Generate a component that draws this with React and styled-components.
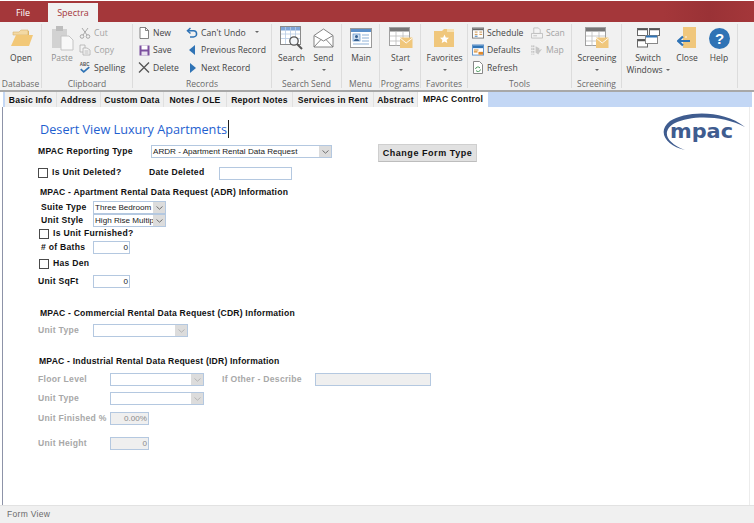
import React from 'react';
import styled, { createGlobalStyle } from 'styled-components';

const Global = createGlobalStyle`
  html, body { margin: 0; padding: 0; background: #fff; }
  * { box-sizing: border-box; }
`;

const Page = styled.div`
  width: 754px; height: 523px; display: flex; flex-direction: column; overflow: hidden;
  background: #fff; font-family: "Open Sans", "Liberation Sans", sans-serif; padding-top: 1px;
`;
const TitleBar = styled.div`
  height: 21px; flex: none; display: flex; align-items: flex-end; padding-left: 3px;
  background: linear-gradient(90deg, #a4373a 0%, #a4373a 88%, #9a3236 94%, #a4373a 100%);
`;
const FileTab = styled.div`
  width: 40px; height: 21px; color: #fff; font-size: 9px; display: flex; align-items: center; justify-content: center; padding-top: 2px;
`;
const SpectraTab = styled.div`
  width: 50px; margin-left: 5px; height: 19px; background: #f1f1f1; color: #a4373a; font-size: 9px;
  display: flex; align-items: center; justify-content: center;
`;
const Ribbon = styled.div`
  height: 68px; flex: none; background: #f1f1f1; display: flex; padding-top: 2px;
`;
const Group = styled.div`
  width: ${p => p.$w}px; flex: none; display: flex; flex-direction: column; height: 64px;
  border-right: 1px solid #dcdcdc;
`;
const GroupBody = styled.div`
  height: 54px; flex: none; display: flex; padding-left: ${p => p.$pl || 0}px;
`;
const GroupLabel = styled.div`
  height: 11px; line-height: 11px; text-align: center; font-size: 8.5px; color: #6a6a6a; white-space: nowrap;
`;
const Large = styled.div`
  width: ${p => p.$w}px; flex: none; display: flex; flex-direction: column; align-items: center;
  font-size: 8.5px; line-height: 12px; white-space: nowrap; color: ${p => p.$off ? '#8f8f8f' : '#444'};
`;
const LargeIcon = styled.div`
  height: 28px; display: flex; align-items: center; justify-content: center;
`;
const Caret = styled.span`
  width: 0; height: 0; display: ${p => p.$inline ? 'inline-block' : 'block'};
  border-left: 2px solid transparent; border-right: 2px solid transparent; border-top: 2.5px solid #666;
  margin: ${p => p.$inline ? `0 0 2px ${p.$gap || 3}px` : '5px 0 0'}; vertical-align: middle;
`;
const Stack = styled.div`
  display: flex; flex-direction: column; width: ${p => p.$w}px; flex: none;
`;
const Small = styled.div`
  height: 17.5px; display: flex; align-items: center; gap: 3px; font-size: 8.6px; white-space: nowrap;
  color: ${p => p.$off ? '#a3a3a3' : '#444'};
`;
const SmallIcon = styled.span`
  width: 12px; height: 12px; flex: none; display: flex; align-items: center; justify-content: center;
`;
const Rule = styled.div`
  height: 2px; flex: none; background: #a8a8a8;
`;
const TabStrip = styled.div`
  height: 15px; flex: none; display: flex; background: #c3d7f5; padding-left: 2px; margin-left: 3px; margin-right: 2px;
`;
const Tab = styled.div`
  width: ${p => p.$w}px; flex: none; height: 15px; display: flex; align-items: center; justify-content: center;
  font: bold 8.6px "Liberation Sans", sans-serif; letter-spacing: .22px; color: #111; white-space: nowrap;
  background: ${p => p.$active ? '#fff' : '#f0f0f0'};
  border-right: ${p => p.$active ? 'none' : '1px solid #e0e0e0'};
  padding-bottom: ${p => p.$active ? 2 : 0}px;
`;
const FormArea = styled.div`
  flex: 1; min-height: 0; margin-left: 2px; margin-right: 4px; padding-left: 35px; border-left: 1px solid #8d93a8; border-right: 1px solid #ececec;
  background: #fff; display: flex; flex-direction: column;
`;
const Header = styled.div`
  display: flex; height: 38px; padding-top: 13px; padding-right: 2px;
`;
const Title = styled.div`
  font: 12.7px "Open Sans", sans-serif; color: #1f5fd0; line-height: 18px; padding-left: 2px; white-space: nowrap; height: 18px;
  span { border-right: 1px solid #222; padding-right: 1px; }
`;
const Logo = styled.svg`
  margin-left: auto; margin-top: -8px; flex: none;
`;
const Row = styled.div`
  display: flex; align-items: center; flex: none;
  height: ${p => p.$h}px; margin-top: ${p => p.$mt || 0}px; padding-left: ${p => p.$pl || 0}px;
`;
const Label = styled.div`
  width: ${p => p.$w ? `${p.$w}px` : 'auto'}; flex: none; margin-left: ${p => p.$ml || 0}px; white-space: nowrap; padding-bottom: 2px;
  font: bold 8.6px "Liberation Sans", sans-serif; letter-spacing: .28px; color: ${p => p.$off ? '#a8a8a8' : '#111'};
`;
const Heading = styled.div`
  margin-left: ${p => p.$ml || 2}px; white-space: nowrap;
  font: bold 8.6px "Liberation Sans", sans-serif; letter-spacing: .2px; color: #111;
`;
const Check = styled.span`
  width: 10px; height: 10px; flex: none; border: 1px solid #4a4a4a; background: #fff; margin-right: 4px; margin-left: ${p => p.$ml || 0}px;
`;
const SelectBox = styled.div`
  width: ${p => p.$w}px; height: 13px; flex: none; display: flex; border: 1px solid #b4c8e0; background: #fff;
`;
const SelectText = styled.div`
  flex: 1; min-width: 0; white-space: nowrap; font: 8.1px "Liberation Sans", sans-serif; color: #222; line-height: 11px; padding-left: 1px;
`;
const SelectArrow = styled.div`
  width: 12px; flex: none; background: #dcdcdc; display: flex; align-items: center; justify-content: center;
`;
const Field = styled.div`
  width: ${p => p.$w}px; height: 13px; flex: none; margin-left: ${p => p.$ml || 0}px;
  border: 1px solid #b4c8e0; background: ${p => p.$off ? '#efefef' : '#fff'};
  font: 8.1px "Liberation Sans", sans-serif; line-height: 11px; text-align: right; padding-right: 1px;
  color: ${p => p.$off ? '#8a8a8a' : '#222'};
`;
const FormButton = styled.div`
  width: 99px; height: 18px; flex: none; margin-left: 46px; background: #e1e1e1; border: 1px solid #cfcfcf; border-bottom-color: #bdbdbd;
  display: flex; align-items: center; justify-content: center; align-self: flex-start; margin-top: -1px;
  font: bold 9px "Liberation Sans", sans-serif; letter-spacing: .55px; color: #111; white-space: nowrap;
`;
const StatusBar = styled.div`
  height: 18px; flex: none; background: #f0f0f0; border-top: 1px solid #e2e2e2; color: #6a6a6a;
  font: 8.5px "Liberation Sans", sans-serif; letter-spacing: .3px; line-height: 17px; padding-left: 7px;
`;

const Chevron = ({ off }) => (
  <svg width="7" height="4" viewBox="0 0 7 4"><path d="M.5.5 3.5 3.2 6.500.5" fill="none" stroke={off ? '#b5b5b5' : '#707070'} strokeWidth="1" /></svg>
);
const Select = ({ w, text, off }) => (
  <SelectBox $w={w}><SelectText>{text}</SelectText><SelectArrow><Chevron off={off} /></SelectArrow></SelectBox>
);

const IFolder = () => (
  <svg width="23" height="20" viewBox="0 0 23 20">
    <path d="M3 5h6l2-2h8v4H3z" fill="#dcb56a" />
    <path d="M3 4h6l2-2h7v5H3z" fill="#f3d9a4" stroke="#d9b36c" strokeWidth=".6" />
    <path d="M6 7h17l-4 11H1z" fill="#f2c878" />
  </svg>
);
const IPaste = () => (
  <svg width="23" height="26" viewBox="0 0 23 26">
    <rect x="1" y="4" width="15" height="19" fill="#d2d2d2" />
    <rect x="5" y="1" width="7" height="5" fill="#bdbdbd" />
    <path d="M10 11h8l4 4v10H10z" fill="#f8f8f8" stroke="#c4c4c4" />
  </svg>
);
const ICut = () => (
  <svg width="12" height="12" viewBox="0 0 12 12" fill="none" stroke="#a8a8a8" strokeWidth="1">
    <circle cx="3" cy="9.5" r="1.8" /><circle cx="9" cy="9.5" r="1.8" /><path d="M4 8 9 1M8 8 3 1" />
  </svg>
);
const ICopy = () => (
  <svg width="12" height="12" viewBox="0 0 12 12" fill="#f4f4f4" stroke="#b0b0b0" strokeWidth=".8">
    <path d="M1 1h5v7H1z" /><path d="M4 4h4l3 2v5H4z" /><path d="M5.5 7h4M5.5 9h4" />
  </svg>
);
const ISpell = () => (
  <svg width="14" height="13" viewBox="0 0 14 13">
    <text x="1" y="5" fontSize="5.2" fontWeight="700" fontFamily="Liberation Sans" fill="#555">ABC</text>
    <path d="M2 8.5 5.5 11.5 12 6" fill="none" stroke="#2f73b5" strokeWidth="2" />
  </svg>
);
const INew = () => (
  <svg width="10" height="12" viewBox="0 0 10 12"><path d="M1 .5h5.500L9.500 3.500v8H1z" fill="#fff" stroke="#666" strokeWidth=".8" /><path d="M6.500.5v3h3" fill="none" stroke="#666" strokeWidth=".8" /></svg>
);
const ISave = () => (
  <svg width="11" height="11" viewBox="0 0 11 11"><rect x=".5" y=".5" width="10" height="10" fill="#7b4f9e" /><rect x="2.500" y=".5" width="6" height="4" fill="#fff" /><rect x="2.500" y="6.500" width="6" height="4" fill="#e9e2f0" /></svg>
);
const IDelete = () => (
  <svg width="12" height="11" viewBox="0 0 12 11"><path d="M1 .5 11 10.500M11 .5 1 10.500" stroke="#555" strokeWidth="1.300" /></svg>
);
const IUndo = () => (
  <svg width="12" height="11" viewBox="0 0 12 11" fill="none" stroke="#2f73b5" strokeWidth="1.500"><path d="M4.500 1 1.500 3.800 4.500 6.500" /><path d="M2 3.800h5.500a3 3 0 0 1 0 6.200H4" /></svg>
);
const IPrev = () => (<svg width="7" height="10" viewBox="0 0 7 10"><path d="M6 0v10L0 5z" fill="#2f73b5" /></svg>);
const INext = () => (<svg width="7" height="10" viewBox="0 0 7 10"><path d="M1 0v10l6-5z" fill="#2f73b5" /></svg>);
const ISearch = () => (
  <svg width="24" height="25" viewBox="0 0 24 25">
    <rect x=".5" y=".5" width="20" height="18" fill="#fff" stroke="#8a8a8a" />
    <rect x="1" y="1" width="19" height="3.500" fill="#7ea6d8" />
    <path d="M5.500 1v17M10.500 1v17M15.500 1v17M1 8h19M1 12.500h19" stroke="#b7cbe4" strokeWidth=".8" />
    <circle cx="14" cy="15" r="4.200" fill="#f3f6fa" stroke="#555" strokeWidth="1.300" />
    <path d="M17 18l5 5" stroke="#555" strokeWidth="2" />
  </svg>
);
const ISend = () => (
  <svg width="21" height="20" viewBox="0 0 21 20" fill="#fff" stroke="#777" strokeWidth=".9"><path d="M1 7.500 10.500 1 20 7.500V19H1z" /><path d="M1 7.500 10.500 13 20 7.500" /><path d="M1 19l7-7.500M20 19l-7-7.500" /></svg>
);
const IMain = () => (
  <svg width="22" height="20" viewBox="0 0 22 20">
    <rect x=".5" y=".5" width="21" height="19" fill="#fff" stroke="#9a9a9a" />
    <rect x="1" y="1" width="20" height="3" fill="#5b8fc9" />
    <rect x="3" y="6" width="7" height="7" fill="#cfe0f2" stroke="#5b8fc9" strokeWidth=".7" />
    <circle cx="6.500" cy="8.500" r="1.500" fill="#355f90" /><path d="M4 13c0-3 5-3 5 0z" fill="#355f90" />
    <path d="M12 7h7M12 10h7M12 13h7M3 16h16" stroke="#8fb1d8" strokeWidth="1.200" />
  </svg>
);
const ITable = () => (
  <svg width="24" height="22" viewBox="0 0 24 22">
    <rect x=".5" y=".5" width="20" height="18" fill="#fff" stroke="#a0a0a0" />
    <rect x="1" y="1" width="19" height="3.500" fill="#777" />
    <path d="M7 4v15M14 4v15M1 9h19M1 14h19" stroke="#bbb" strokeWidth=".8" />
    <rect x="11" y="10.500" width="12.500" height="10.500" fill="#f0c77c" />
    <path d="M11 11l6.200 5 6.300-5" fill="none" stroke="#fff" strokeWidth=".9" />
  </svg>
);
const IFav = () => (
  <svg width="21" height="20" viewBox="0 0 21 20">
    <path d="M0 3h8l2 -2h10v18H0z" fill="#f0c77c" /><path d="M13 1h7v3h-7z" fill="#f7e1b3" />
    <path d="M10.500 6.500l1.300 3 3.200.3-2.400 2.100.7 3.200-2.800-1.700-2.800 1.700.7-3.200-2.400-2.100 3.200-.3z" fill="#fff" />
  </svg>
);
const ISchedule = () => (
  <svg width="13" height="12" viewBox="0 0 13 12"><rect x=".5" y=".5" width="12" height="11" fill="#fff" stroke="#777" /><rect x="1" y="1" width="11" height="2" fill="#666" /><path d="M3 5h3M8 5h3M3 7.500h3M8 7.500h3" stroke="#c98a3c" /><path d="M3 9.500h3" stroke="#2f73b5" /></svg>
);
const IDefaults = () => (
  <svg width="13" height="12" viewBox="0 0 13 12"><rect x=".5" y=".5" width="12" height="11" fill="#fff" stroke="#5b8fc9" /><rect x="1" y="1" width="11" height="3" fill="#2f73b5" /><path d="M2 6h5M2 8h4" stroke="#d98b2c" strokeWidth="1.200" /><rect x="7" y="8" width="5" height="3" fill="#e2892b" /></svg>
);
const IRefresh = () => (
  <svg width="12" height="13" viewBox="0 0 12 13"><path d="M1.500.5h6l3 3v9h-9z" fill="#fff" stroke="#888" /><path d="M3.500 8a2.500 2.500 0 0 1 4.500-1M8.500 8.500a2.500 2.500 0 0 1-4.500 1" fill="none" stroke="#4a9a5b" /></svg>
);
const IScan = () => (
  <svg width="13" height="12" viewBox="0 0 13 12" fill="#f3f3f3" stroke="#b5b5b5" strokeWidth=".8"><path d="M3 .5h5l2 2v4H3z" /><path d="M.5 6.500h12v5H.5z" /><path d="M2.500 9h4" /></svg>
);
const IMap = () => (
  <svg width="13" height="12" viewBox="0 0 13 12" fill="none" stroke="#b0b0b0"><path d="M1 1v10M3 1v10" strokeDasharray="2 1" /><path d="M5 2l4 2v2l3-1-3 4-1 2-3-2z" fill="#c7c7c7" stroke="none" /></svg>
);
const ISwitch = () => (
  <svg width="23" height="20" viewBox="0 0 23 20" fill="#fff" stroke="#666">
    <rect x=".5" y=".5" width="10" height="7" /><rect x="12.500" y=".5" width="10" height="7" /><rect x=".5" y="11.500" width="10" height="7.500" />
    <path d="M1 1.500h9M13 1.500h9M1 12.500h9" stroke="#555" strokeWidth="1.500" />
    <rect x="8.500" y="7.500" width="12" height="8" stroke="#888" /><path d="M9 8.500h11" stroke="#2f73b5" strokeWidth="2" />
  </svg>
);
const IClose = () => (
  <svg width="20" height="22" viewBox="0 0 20 22">
    <rect x="6" y="0" width="13" height="21" fill="#f0c77c" />
    <circle cx="9" cy="10" r=".8" fill="#fff" />
    <path d="M1 14h12M6 9.500 1.200 14 6 18.500" fill="none" stroke="#2f73b5" strokeWidth="2.200" />
  </svg>
);
const IHelp = () => (
  <svg width="21" height="21" viewBox="0 0 21 21">
    <circle cx="10.500" cy="10.500" r="10.500" fill="#2f73b5" />
    <text x="10.500" y="16" textAnchor="middle" fontSize="15" fontWeight="700" fontFamily="Liberation Sans" fill="#fff">?</text>
  </svg>
);

const Big = ({ w, icon, label, caret, off, inlineCaret, label2 }) => (
  <Large $w={w} $off={off}>
    <LargeIcon>{icon}</LargeIcon>
    <div>{label}</div>
    {label2 && <div>{label2}{inlineCaret && <Caret $inline />}</div>}
    {caret && <Caret />}
  </Large>
);
const Sm = ({ icon, label, off, caret }) => (
  <Small $off={off}><SmallIcon>{icon}</SmallIcon><span>{label}{caret && <Caret $inline $gap={9} />}</span></Small>
);

const tabs = [
  ['Basic Info', 52], ['Address', 44], ['Custom Data', 63], ['Notes / OLE', 63],
  ['Report Notes', 66], ['Services in Rent', 81], ['Abstract', 44],
];

export default function App() {
  return (
    <Page>
      <Global />
      <TitleBar>
        <FileTab>File</FileTab>
        <SpectraTab>Spectra</SpectraTab>
      </TitleBar>
      <Ribbon>
        <Group $w={42}>
          <GroupBody><Big w={42} icon={<IFolder />} label="Open" /></GroupBody>
          <GroupLabel>Database</GroupLabel>
        </Group>
        <Group $w={91}>
          <GroupBody $pl={3}>
            <Big w={34} off icon={<IPaste />} label="Paste" />
            <Stack $w={53}>
              <Sm off icon={<ICut />} label="Cut" />
              <Sm off icon={<ICopy />} label="Copy" />
              <Sm icon={<ISpell />} label="Spelling" />
            </Stack>
          </GroupBody>
          <GroupLabel>Clipboard</GroupLabel>
        </Group>
        <Group $w={139}>
          <GroupBody $pl={5}>
            <Stack $w={48}>
              <Sm icon={<INew />} label="New" />
              <Sm icon={<ISave />} label="Save" />
              <Sm icon={<IDelete />} label="Delete" />
            </Stack>
            <Stack $w={84}>
              <Sm icon={<IUndo />} label="Can't Undo" caret />
              <Sm icon={<IPrev />} label="Previous Record" />
              <Sm icon={<INext />} label="Next Record" />
            </Stack>
          </GroupBody>
          <GroupLabel>Records</GroupLabel>
        </Group>
        <Group $w={70}>
          <GroupBody $pl={3}>
            <Big w={33} icon={<ISearch />} label="Search" caret />
            <Big w={31} icon={<ISend />} label="Send" caret />
          </GroupBody>
          <GroupLabel>Search Send</GroupLabel>
        </Group>
        <Group $w={38}>
          <GroupBody><Big w={38} icon={<IMain />} label="Main" /></GroupBody>
          <GroupLabel>Menu</GroupLabel>
        </Group>
        <Group $w={41}>
          <GroupBody><Big w={41} icon={<ITable />} label="Start" caret /></GroupBody>
          <GroupLabel>Programs</GroupLabel>
        </Group>
        <Group $w={47}>
          <GroupBody><Big w={47} icon={<IFav />} label="Favorites" caret /></GroupBody>
          <GroupLabel>Favorites</GroupLabel>
        </Group>
        <Group $w={104}>
          <GroupBody $pl={4}>
            <Stack $w={59}>
              <Sm icon={<ISchedule />} label="Schedule" />
              <Sm icon={<IDefaults />} label="Defaults" />
              <Sm icon={<IRefresh />} label="Refresh" />
            </Stack>
            <Stack $w={40}>
              <Sm off icon={<IScan />} label="Scan" />
              <Sm off icon={<IMap />} label="Map" />
            </Stack>
          </GroupBody>
          <GroupLabel>Tools</GroupLabel>
        </Group>
        <Group $w={50}>
          <GroupBody><Big w={50} icon={<ITable />} label="Screening" caret /></GroupBody>
          <GroupLabel>Screening</GroupLabel>
        </Group>
        <Group $w={116}>
          <GroupBody>
            <Big w={52} icon={<ISwitch />} label="Switch" label2="Windows" inlineCaret />
            <Big w={26} icon={<IClose />} label="Close" />
            <Big w={38} icon={<IHelp />} label="Help" />
          </GroupBody>
          <GroupLabel />
        </Group>
      </Ribbon>
      <Rule />
      <TabStrip>
        {tabs.map(([t, w]) => <Tab key={t} $w={w}>{t}</Tab>)}
        <Tab $w={70} $active>MPAC Control</Tab>
      </TabStrip>
      <FormArea>
        <Header>
          <Title><span>Desert View Luxury Apartments</span></Title>
          <Logo width="86" height="42" viewBox="0 0 86 42">
            <path d="M9 9C24-1 62-3 84 15 62 3 30 3 14 11 1 18 3 30 24 38 6 34-5 20 9 9z" fill="#3f5c8f" />
            <text x="9" y="26" fontSize="20" fontWeight="700" fontFamily="DejaVu Sans" textLength="63" lengthAdjust="spacingAndGlyphs" fill="#3f5c8f">mpac</text>
          </Logo>
        </Header>
        <Row $h={13}>
          <Label $w={113}>MPAC Reporting Type</Label>
          <Select w={181} text="ARDR - Apartment Rental Data Request" />
          <FormButton>Change Form Type</FormButton>
        </Row>
        <Row $h={12} $mt={9}>
          <Check />
          <Label $w={97}>Is Unit Deleted?</Label>
          <Label $w={70}>Date Deleted</Label>
          <Field $w={73} />
        </Row>
        <Row $h={12} $mt={7}><Heading>MPAC - Apartment Rental Data Request (ADR) Information</Heading></Row>
        <Row $h={13} $mt={3} $pl={3}><Label $w={52}>Suite Type</Label><Select w={73} text="Three Bedroom" /></Row>
        <Row $h={13} $pl={3}><Label $w={52}>Unit Style</Label><Select w={73} text="High Rise Multip" /></Row>
        <Row $h={12} $mt={1}><Check $ml={1} /><Label>Is Unit Furnished?</Label></Row>
        <Row $h={13} $mt={1} $pl={3}><Label $w={52}># of Baths</Label><Field $w={37}>0</Field></Row>
        <Row $h={11} $mt={4}><Check $ml={1} /><Label>Has Den</Label></Row>
        <Row $h={13} $mt={6}><Label $w={55}>Unit SqFt</Label><Field $w={37}>0</Field></Row>
        <Row $h={12} $mt={19}><Heading>MPAC - Commercial Rental Data Request (CDR) Information</Heading></Row>
        <Row $h={13} $mt={5}><Label $w={55} $off>Unit Type</Label><Select w={95} off /></Row>
        <Row $h={12} $mt={18}><Heading $ml={1}>MPAC - Industrial Rental Data Request (IDR) Information</Heading></Row>
        <Row $h={13} $mt={6}>
          <Label $w={72} $off>Floor Level</Label>
          <Select w={94} off />
          <Label $w={93} $ml={18} $off>If Other - Describe</Label>
          <Field $w={116} $off />
        </Row>
        <Row $h={13} $mt={6}><Label $w={72} $off>Unit Type</Label><Select w={94} off /></Row>
        <Row $h={13} $mt={7}><Label $w={72} $off>Unit Finished %</Label><Field $w={39} $off>0.00%</Field></Row>
        <Row $h={13} $mt={12}><Label $w={72} $off>Unit Height</Label><Field $w={39} $off>0</Field></Row>
      </FormArea>
      <StatusBar>Form View</StatusBar>
    </Page>
  );
}
